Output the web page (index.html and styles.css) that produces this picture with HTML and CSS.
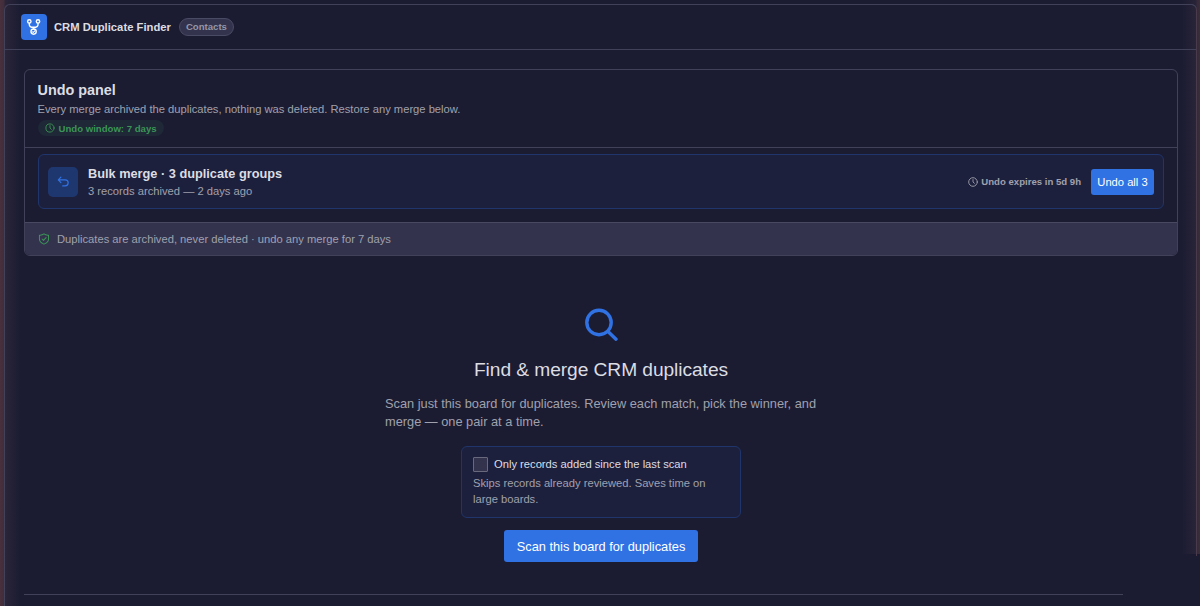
FILE: index.html
```html
<!DOCTYPE html>
<html lang="en">
<head>
    <meta charset="UTF-8">
    <meta name="viewport" content="width=device-width, initial-scale=1.0">
    <title>CRM Duplicate Finder</title>
    <link rel="stylesheet" href="styles.css">
</head>
<body>
    <div class="edge edge-left"></div>
    <div class="edge edge-right"></div>
    <div class="app">
        <header class="app-header">
            <div class="logo">
                <svg viewBox="0 0 26 26" fill="none" stroke="currentColor" stroke-width="1.4" stroke-linecap="round">
                    <circle cx="8.3" cy="7.4" r="1.7"></circle>
                    <circle cx="17" cy="7.4" r="1.7"></circle>
                    <path d="M8.3 9.2v1.2c0 2.2 1.5 2.900 4.300 2.900s4.400-.7 4.400-2.900V9.200M12.600 13.300v1.600"></path>
                    <circle cx="12.600" cy="17.600" r="2.600"></circle>
                    <path d="M11.600 17.800l.7.7 1.400-1.600" stroke-width="1.1"></path>
                </svg>
            </div>
            <h1>CRM Duplicate Finder</h1>
            <span class="tag">Contacts</span>
        </header>

        <main class="content">
            <section class="panel">
                <div class="panel-head">
                    <h2>Undo panel</h2>
                    <p>Every merge archived the duplicates, nothing was deleted. Restore any merge below.</p>
                    <span class="window-badge">
                        <svg viewBox="0 0 20 20" fill="none" stroke="currentColor" stroke-width="1.8" stroke-linecap="round">
                            <circle cx="10" cy="10" r="8.200"></circle>
                            <path d="M10 5.200V10l2.800 2.600"></path>
                        </svg>
                        Undo window: 7 days
                    </span>
                </div>
                <div class="panel-body">
                    <div class="merge-row">
                        <div class="merge-icon">
                            <svg viewBox="0 0 20 20" fill="none" stroke="currentColor" stroke-width="1.800" stroke-linecap="round" stroke-linejoin="round">
                                <path d="M6 3.200L2 7.400l4 4.200M2.200 7.400h10.300a4.700 4.700 0 0 1 0 9.400H8.800"></path>
                            </svg>
                        </div>
                        <div class="merge-text">
                            <h3>Bulk merge · 3 duplicate groups</h3>
                            <p>3 records archived — 2 days ago</p>
                        </div>
                        <span class="expires">
                            <svg viewBox="0 0 20 20" fill="none" stroke="currentColor" stroke-width="1.800" stroke-linecap="round">
                                <circle cx="10" cy="10" r="8.600"></circle>
                                <path d="M10 5.200V10l2.800 2.600"></path>
                            </svg>
                            Undo expires in 5d 9h
                        </span>
                        <button class="btn btn-small">Undo all 3</button>
                    </div>
                </div>
                <div class="panel-foot">
                    <svg viewBox="0 0 20 20" fill="none" stroke="currentColor" stroke-width="1.700" stroke-linecap="round" stroke-linejoin="round">
                        <path d="M10 1.600c2 1.600 4.600 2.200 7.600 2v6.200c0 4.200-3.300 7-7.600 8.700-4.300-1.700-7.600-4.500-7.600-8.700V3.600c3 .2 5.600-.4 7.600-2z"></path>
                        <path d="M6.800 10l2.300 2.300 4.400-4.600"></path>
                    </svg>
                    Duplicates are archived, never deleted · undo any merge for 7 days
                </div>
            </section>

            <section class="finder">
                <svg class="search-icon" viewBox="0 0 34 34" fill="none" stroke="currentColor" stroke-width="3.400" stroke-linecap="round">
                    <circle cx="15" cy="14.500" r="12.200"></circle>
                    <path d="M24 23.600l8 7.600"></path>
                </svg>
                <h2>Find &amp; merge CRM duplicates</h2>
                <p class="lead">Scan just this board for duplicates. Review each match, pick the winner, and merge — one pair at a time.</p>
                <div class="option">
                    <label>
                        <input type="checkbox">
                        Only records added since the last scan
                    </label>
                    <p>Skips records already reviewed. Saves time on large boards.</p>
                </div>
                <button class="btn btn-large">Scan this board for duplicates</button>
            </section>

            <hr class="divider">
        </main>
    </div>
</body>
</html>
```
FILE: styles.css
```css
:root {
    --bg: #1b1c32;
    --surface: #33334e;
    --border: #41425a;
    --primary: #3072e4;
    --text: #dcdde3;
    --muted: #a0a1ad;
    --green: #3c9556;
    --tint: #1d203d;
    --tint-border: #20356b;
}

* {
    margin: 0;
    padding: 0;
    box-sizing: border-box;
}

body {
    background-color: var(--bg);
    color: var(--text);
    height: 606px;
    padding: 4px 3px 0 4px;
    position: relative;
    font-family: "Liberation Sans", Arial, sans-serif;
}

/* warm glow along both sides of the window */
.edge {
    position: absolute;
    top: 0;
    pointer-events: none;
}

.edge-left {
    left: 0;
    width: 20px;
    height: 606px;
    background: linear-gradient(to right, #49313c 0, #402d3b 4px, #2b2539 5px, #20203400 20px);
}

.edge-right {
    right: 0;
    width: 20px;
    height: 554px;
    background: linear-gradient(to left, #3c2d3a 0, #352a39 3px, #292438 4px, #20203400 18px);
}

.app {
    position: relative;
    height: 602px;
    border: 1px solid var(--border);
    border-width: 1px 0 0 1px;
    border-radius: 6px 6px 0 0;
}

/* the right side of the frame stops with the glow */
.app::after {
    content: "";
    position: absolute;
    top: -1px;
    right: 0;
    width: 8px;
    height: 551px;
    border-top: 1px solid var(--border);
    border-right: 1px solid #493b4c;
    border-top-right-radius: 6px;
}

.app-header {
    display: flex;
    align-items: center;
    height: 45px;
    padding-left: 16px;
    border-bottom: 1px solid var(--border);
}

.logo {
    width: 26px;
    height: 26px;
    border-radius: 4px;
    background-color: var(--primary);
    color: #fff;
}

.logo svg {
    display: block;
}

.app-header h1 {
    margin-left: 7px;
    font-size: 11.25px;
    line-height: 16px;
}

.tag {
    margin-left: 8px;
    height: 18px;
    padding: 0 6px;
    border: 1px solid #494a63;
    border-radius: 9px;
    background-color: var(--surface);
    color: #9697a6;
    font-size: 9.6px;
    font-weight: bold;
    line-height: 16px;
}

.content {
    padding: 19px 19px 0;
}

.panel {
    height: 187px;
    border: 1px solid var(--border);
    border-radius: 6px;
    overflow: hidden;
    display: flex;
    flex-direction: column;
}

.panel-head {
    height: 78px;
    padding: 11px 12.5px 0;
    border-bottom: 1px solid var(--border);
}

.panel-head h2 {
    font-size: 14.4px;
    line-height: 18px;
}

.panel-head p {
    margin-top: 2px;
    color: var(--muted);
    font-size: 11.2px;
    line-height: 16px;
}

.window-badge {
    display: flex;
    align-items: center;
    gap: 4px;
    width: fit-content;
    height: 16px;
    margin-top: 3px;
    padding: 0 7px;
    border-radius: 8px;
    background-color: #1e2836;
    color: var(--green);
    font-size: 9.6px;
    font-weight: bold;
}

.window-badge svg {
    width: 10px;
    height: 10px;
}

.panel-body {
    flex: 1;
    padding: 6px 13px 0;
}

.merge-row {
    display: flex;
    align-items: center;
    height: 55px;
    padding: 0 9px;
    border: 1px solid var(--tint-border);
    border-radius: 6px;
    background-color: var(--tint);
}

.merge-icon {
    display: flex;
    align-items: center;
    justify-content: center;
    width: 30px;
    height: 30px;
    border-radius: 5px;
    background-color: #1f376f;
    color: var(--primary);
}

.merge-icon svg {
    width: 13px;
    height: 13px;
}

.merge-text {
    flex: 1;
    margin-left: 10px;
}

.merge-text h3 {
    font-size: 12.75px;
    line-height: 18px;
}

.merge-text p {
    color: var(--muted);
    font-size: 11.2px;
    line-height: 16px;
}

.expires {
    display: flex;
    align-items: center;
    gap: 3px;
    margin-right: 10px;
    color: var(--muted);
    font-size: 9.6px;
    font-weight: bold;
}

.expires svg {
    width: 10px;
    height: 10px;
}

.btn {
    border: 0;
    border-radius: 3px;
    background-color: var(--primary);
    color: #fff;
    font-family: inherit;
}

.btn-small {
    width: 63px;
    height: 26px;
    font-size: 11.2px;
}

.panel-foot {
    display: flex;
    align-items: center;
    gap: 7px;
    height: 33px;
    padding-left: 13px;
    border-top: 1px solid #494a61;
    background-color: var(--surface);
    color: var(--muted);
    font-size: 11.2px;
}

.panel-foot svg {
    width: 12px;
    height: 12px;
    color: var(--green);
}

.finder {
    display: flex;
    flex-direction: column;
    align-items: center;
    padding-top: 52px;
}

.search-icon {
    width: 34px;
    height: 34px;
    color: var(--primary);
}

.finder h2 {
    margin-top: 16px;
    font-size: 19.2px;
    font-weight: normal;
    letter-spacing: -0.07px;
    line-height: 24px;
}

.lead {
    width: 432px;
    margin-top: 13px;
    color: var(--muted);
    font-size: 12.8px;
    line-height: 18px;
}

.option {
    width: 280px;
    height: 72px;
    margin-top: 15px;
    padding: 9px 11px;
    border: 1px solid var(--tint-border);
    border-radius: 6px;
    background-color: var(--tint);
}

.option label {
    display: flex;
    align-items: center;
    gap: 6px;
    font-size: 11.2px;
    line-height: 16px;
}

.option input {
    appearance: none;
    width: 15px;
    height: 15px;
    border: 1px solid #68697c;
    border-radius: 1px;
    background-color: var(--surface);
}

.option p {
    margin-top: 3px;
    color: var(--muted);
    font-size: 11.2px;
    line-height: 16px;
}

.btn-large {
    width: 194px;
    height: 32px;
    margin-top: 12px;
    font-size: 12.8px;
}

.divider {
    width: 1099px;
    margin-top: 32px;
    border: 0;
    border-top: 1px solid var(--border);
}
```
